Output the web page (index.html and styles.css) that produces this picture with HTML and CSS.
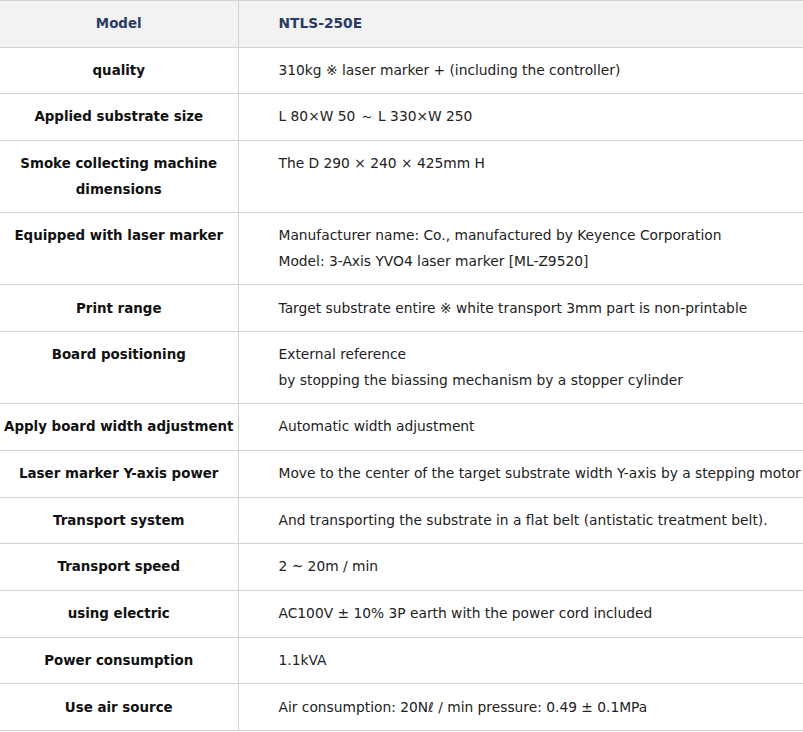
FILE: index.html
```html
<!DOCTYPE html>
<html>
<head>
<meta charset="utf-8">
<link rel="stylesheet" href="styles.css">
</head>
<body>
<table class="spec">
  <colgroup><col class="col-label"><col class="col-value"></colgroup>
  <tr class="head"><th class="label">Model</th><th class="value">NTLS-250E</th></tr>
  <tr><th class="label">quality</th><td class="value">310kg ※ laser marker + (including the controller)</td></tr>
  <tr><th class="label">Applied substrate size</th><td class="value">L 80×W 50 ～ L 330×W 250</td></tr>
  <tr><th class="label">Smoke collecting machine dimensions</th><td class="value">The D 290 × 240 × 425mm H</td></tr>
  <tr><th class="label">Equipped with laser marker</th><td class="value">Manufacturer name: Co., manufactured by Keyence Corporation<br>Model: 3-Axis YVO4 laser marker [ML-Z9520]</td></tr>
  <tr><th class="label">Print range</th><td class="value">Target substrate entire ※ white transport 3mm part is non-printable</td></tr>
  <tr><th class="label">Board positioning</th><td class="value">External reference<br>by stopping the biassing mechanism by a stopper cylinder</td></tr>
  <tr><th class="label">Apply board width adjustment</th><td class="value">Automatic width adjustment</td></tr>
  <tr><th class="label">Laser marker Y-axis power</th><td class="value">Move to the center of the target substrate width Y-axis by a stepping motor</td></tr>
  <tr><th class="label">Transport system</th><td class="value">And transporting the substrate in a flat belt (antistatic treatment belt).</td></tr>
  <tr><th class="label">Transport speed</th><td class="value">2 ~ 20m / min</td></tr>
  <tr><th class="label">using electric</th><td class="value">AC100V ± 10% 3P earth with the power cord included</td></tr>
  <tr><th class="label">Power consumption</th><td class="value">1.1kVA</td></tr>
  <tr><th class="label">Use air source</th><td class="value">Air consumption: 20Nℓ / min pressure: 0.49 ± 0.1MPa</td></tr>
</table>
</body>
</html>
```
FILE: styles.css
```css
html, body {
  margin: 0;
  padding: 0;
  background: #fff;
}
body {
  font-family: "DejaVu Sans", Verdana, sans-serif;
  font-size: 13.8px;
  color: #222;
  overflow: hidden;
}
.spec {
  border-collapse: collapse;
  width: 840px;
  table-layout: fixed;
}
.col-label {
  width: 238px;
}
.spec th, .spec td {
  border: 1px solid #d2d2d2;
  line-height: 25.5px;
  padding: 10.1px 0;
  vertical-align: top;
}
.spec .label {
  border-left: none;
  text-align: center;
  font-weight: bold;
  font-size: 13.4px;
  color: #111;
  padding-left: 0;
  padding-right: 0;
}
.spec .value {
  text-align: left;
  font-weight: normal;
  padding-left: 40px;
  white-space: nowrap;
}
.spec .head th {
  background: #f2f2f2;
  color: #2c3a66;
  font-weight: bold;
}
```
